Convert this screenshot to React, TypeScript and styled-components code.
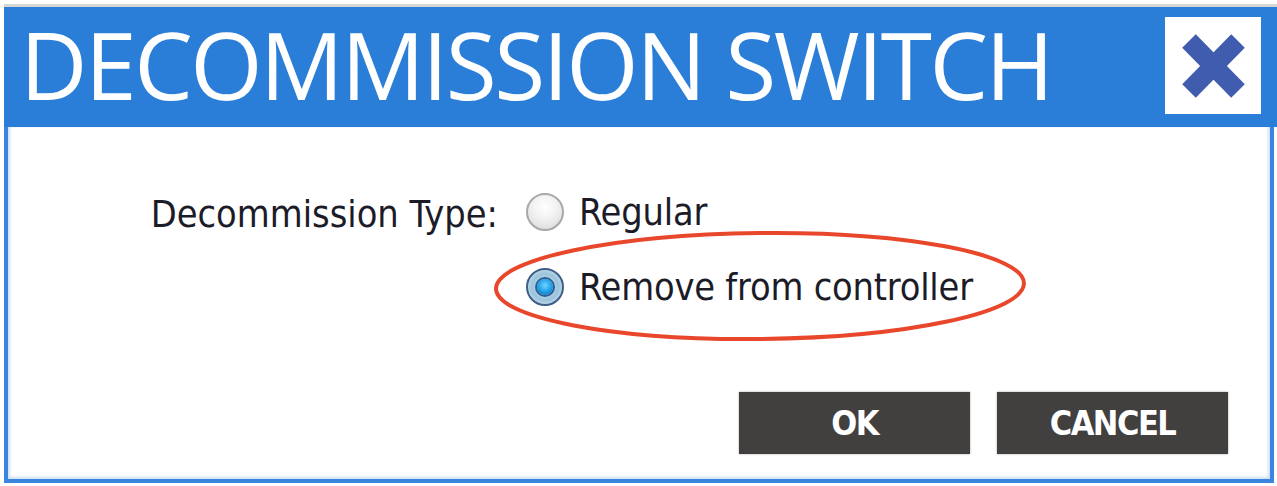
import React from "react";
import styled, { createGlobalStyle } from "styled-components";

const GlobalStyle = createGlobalStyle`
  html, body {
    margin: 0;
    padding: 0;
    background: #ffffff;
  }
  body {
    font-family: "DejaVu Sans", Verdana, sans-serif;
  }
`;

const Page = styled.div`
  width: 1277px;
  height: 486px;
  padding-top: 4px;
  padding-left: 4px;
  box-sizing: border-box;
  overflow: hidden;
`;

const Dialog = styled.div`
  display: flex;
  flex-direction: column;
  border-top: 3px solid #d6d6d6;
`;

const Header = styled.div`
  height: 120px;
  background: #2a7ed8;
  display: flex;
  align-items: flex-start;
  justify-content: space-between;
  padding: 0 16px 0 16px;
`;

const Title = styled.h1`
  margin: 0;
  font-family: "Open Sans", "Noto Sans", sans-serif;
  font-weight: 400;
  font-size: 93px;
  line-height: 114px;
  color: #ffffff;
  letter-spacing: -2.5px;
  white-space: nowrap;
`;

const CloseButton = styled.button`
  margin-top: 10px;
  width: 96px;
  height: 97px;
  border: none;
  padding: 0;
  background: #ffffff;
  display: flex;
  align-items: center;
  justify-content: center;
  cursor: pointer;
`;

const Body = styled.div`
  position: relative;
  width: 1270px;
  height: 356px;
  box-sizing: border-box;
  border: 4px solid #3a86de;
  border-top: none;
  background: #ffffff;
  box-shadow: inset 3px 0 3px -1px #cfe1f6, inset -3px 0 3px -1px #cfe1f6,
    inset 0 -3px 3px -1px #cfe1f6;
  display: flex;
  flex-direction: column;
`;

const Form = styled.div`
  display: grid;
  grid-template-columns: 490px auto;
  column-gap: 28px;
  row-gap: 31px;
  padding-top: 65px;
`;

const textFace = `
  font-family: "DejaVu Sans Condensed", "DejaVu Sans", Verdana, sans-serif;
  font-stretch: semi-condensed;
  font-size: 37.6px;
  color: #1c1c28;
  white-space: nowrap;
`;

const Label = styled.div`
  ${textFace}
  grid-row: 1;
  justify-self: end;
  align-self: center;
`;

const Option = styled.label`
  ${textFace}
  grid-column: 2;
  display: flex;
  align-items: center;
  gap: 15px;
  height: 40px;
  letter-spacing: -0.2px;
`;

const Radio = styled.span<{ $checked?: boolean }>`
  position: relative;
  width: 38px;
  height: 38px;
  border-radius: 50%;
  box-sizing: border-box;
  flex: none;
  border: 2px solid ${(p) => (p.$checked ? "#3f5e86" : "#a9a9a9")};
  background: ${(p) =>
    p.$checked
      ? "radial-gradient(circle at 50% 50%, #d6ecf9 0, #9cc3dc 55%, #c9dfee 80%, #e8f2f9 100%)"
      : "radial-gradient(circle at 50% 35%, #ffffff 0, #f1f1f1 45%, #d4d4d4 100%)"};
  &::after {
    content: "";
    display: ${(p) => (p.$checked ? "block" : "none")};
    position: absolute;
    left: 50%;
    top: 50%;
    width: 16px;
    height: 16px;
    margin: -8px 0 0 -8px;
    border-radius: 50%;
    background: radial-gradient(circle at 50% 40%, #6fd4ff 0, #1d9be6 55%, #0b5fa8 100%);
    box-shadow: 0 0 0 2px #2d5e8e;
  }
`;

const Actions = styled.div`
  display: flex;
  justify-content: flex-end;
  gap: 27px;
  margin-top: 85px;
  padding-right: 42px;
`;

const ActionButton = styled.button`
  width: 231px;
  height: 62px;
  border: none;
  background: #423f3f;
  color: #ffffff;
  font-family: "DejaVu Sans Condensed", "DejaVu Sans", Verdana, sans-serif;
  font-stretch: semi-condensed;
  font-weight: 700;
  font-size: 34px;
  letter-spacing: -1.5px;
  box-shadow: 0 0 2px rgba(0, 0, 0, 0.35);
  cursor: pointer;
`;

const Highlight = styled.svg`
  position: absolute;
  left: 480px;
  top: 100px;
  overflow: visible;
  pointer-events: none;
`;

const CloseIcon = () => (
  <svg width="96" height="97" viewBox="0 0 96 97">
    <g stroke="#3f5cae" strokeWidth="19" strokeLinecap="butt">
      <line x1="24" y1="24" x2="73" y2="74" />
      <line x1="73" y1="24" x2="24" y2="74" />
    </g>
  </svg>
);

export default function App() {
  return (
    <>
      <GlobalStyle />
      <Page>
        <Dialog>
          <Header>
            <Title>DECOMMISSION SWITCH</Title>
            <CloseButton aria-label="Close">
              <CloseIcon />
            </CloseButton>
          </Header>
          <Body>
            <Form>
              <Label>Decommission Type:</Label>
              <Option>
                <Radio />
                Regular
              </Option>
              <Option>
                <Radio $checked />
                Remove from controller
              </Option>
            </Form>
            <Actions>
              <ActionButton>OK</ActionButton>
              <ActionButton>CANCEL</ActionButton>
            </Actions>
            <Highlight width="560" height="120" viewBox="0 0 560 120">
              <ellipse
                cx="272"
                cy="59"
                rx="264"
                ry="53"
                fill="none"
                stroke="#e8472c"
                strokeWidth="4"
                transform="rotate(-0.6 272 59)"
              />
            </Highlight>
          </Body>
        </Dialog>
      </Page>
    </>
  );
}
